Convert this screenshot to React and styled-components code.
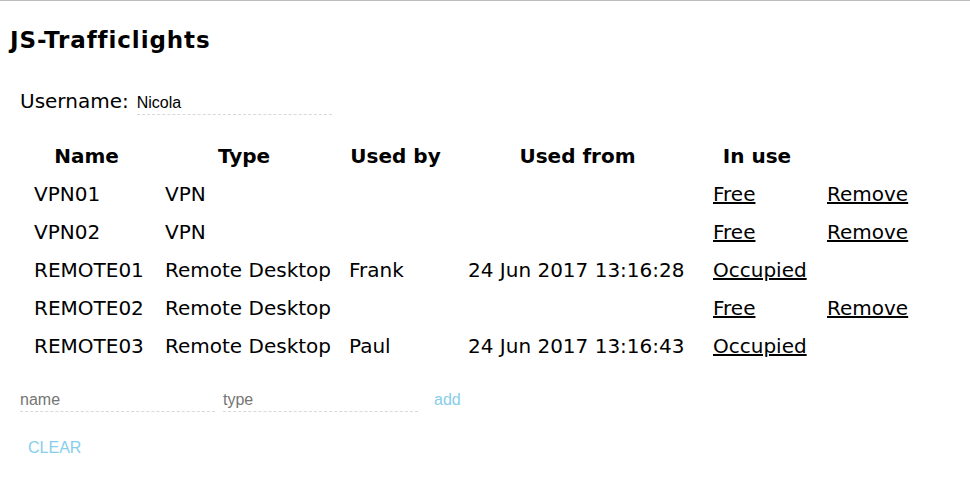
import React, { useState } from 'react';
import styled, { createGlobalStyle } from 'styled-components';

const GlobalStyle = createGlobalStyle`
  body {
    margin: 0;
    background: #fff;
    font-family: "DejaVu Sans", Verdana, sans-serif;
    color: #000;
  }
`;

const resources = [
  { name: 'VPN01', type: 'VPN', user: '', from: '', occupied: false },
  { name: 'VPN02', type: 'VPN', user: '', from: '', occupied: false },
  { name: 'REMOTE01', type: 'Remote Desktop', user: 'Frank', from: '24 Jun 2017 13:16:28', occupied: true },
  { name: 'REMOTE02', type: 'Remote Desktop', user: '', from: '', occupied: false },
  { name: 'REMOTE03', type: 'Remote Desktop', user: 'Paul', from: '24 Jun 2017 13:16:43', occupied: true },
];

const App = () => {
  const [username, setUsername] = useState('Nicola');

  return (
    <Page>
      <GlobalStyle />
      <Title>JS-Trafficlights</Title>

      <UserRow>
        <Label>Username:</Label>
        <LineInput width={195} value={username} onChange={(e) => setUsername(e.target.value)} />
      </UserRow>

      <Table>
        <colgroup>
          <col width="129" />
          <col width="182" />
          <col width="117" />
          <col width="243" />
          <col width="112" />
          <col width="100" />
        </colgroup>
        <thead>
          <tr>
            <th>Name</th>
            <th>Type</th>
            <th>Used by</th>
            <th>Used from</th>
            <th>In use</th>
            <th />
          </tr>
        </thead>
        <tbody>
          {resources.map((r) => (
            <tr key={r.name}>
              <td>{r.name}</td>
              <td>{r.type}</td>
              <td>{r.user}</td>
              <td>{r.from}</td>
              <td><LinkText href="#">{r.occupied ? 'Occupied' : 'Free'}</LinkText></td>
              <td>{!r.occupied && <LinkText href="#">Remove</LinkText>}</td>
            </tr>
          ))}
        </tbody>
      </Table>

      <AddRow>
        <LineInput width={195} placeholder="name" />
        <LineInput width={195} placeholder="type" />
        <FlatButton>add</FlatButton>
      </AddRow>

      <FlatButton upper>Clear</FlatButton>
    </Page>
  );
};

const Page = styled.div`
  border-top: 1px solid #bdbdbd;
  padding: 0 10px;
  min-height: 491px;
`;

const Title = styled.h1`
  margin: 25px 0 0;
  font-size: 23px;
  line-height: 28px;
  font-weight: bold;
  letter-spacing: 0.9px;
`;

const UserRow = styled.div`
  display: flex;
  align-items: baseline;
  gap: 8px;
  margin-top: 36px;
  padding-left: 10px;
`;

const Label = styled.span`
  font-size: 20px;
  line-height: 23px;
`;

const LineInput = styled.input`
  width: ${(p) => p.width}px;
  box-sizing: border-box;
  border: none;
  border-bottom: 1px dashed #d9d9d9;
  padding: 2px 0;
  outline: none;
  background: transparent;
  font-family: "Liberation Sans", Arial, sans-serif;
  font-size: 16px;
  color: #000;

  &::placeholder {
    color: #757575;
  }
`;

const Table = styled.table`
  margin: 21px 0 0 10px;
  border-spacing: 2px;
  table-layout: fixed;
  font-size: 20px;

  th {
    height: 36px;
    padding: 0;
    font-weight: bold;
    text-align: center;
  }

  td {
    height: 36px;
    padding: 0 0 0 12px;
    text-align: left;
    white-space: nowrap;
  }
`;

const LinkText = styled.a`
  color: #000;
  text-decoration: underline;
`;

const AddRow = styled.div`
  display: flex;
  align-items: baseline;
  gap: 8px;
  margin-top: 17px;
  padding-left: 10px;
`;

const FlatButton = styled.button`
  border: none;
  background: transparent;
  padding: 8px;
  margin-left: ${(p) => (p.upper ? '10px' : '0')};
  margin-top: ${(p) => (p.upper ? '14px' : '0')};
  font-family: "Liberation Sans", Arial, sans-serif;
  font-size: 16px;
  color: #87ceeb;
  text-transform: ${(p) => (p.upper ? 'uppercase' : 'none')};
  cursor: pointer;
`;

export default App;
